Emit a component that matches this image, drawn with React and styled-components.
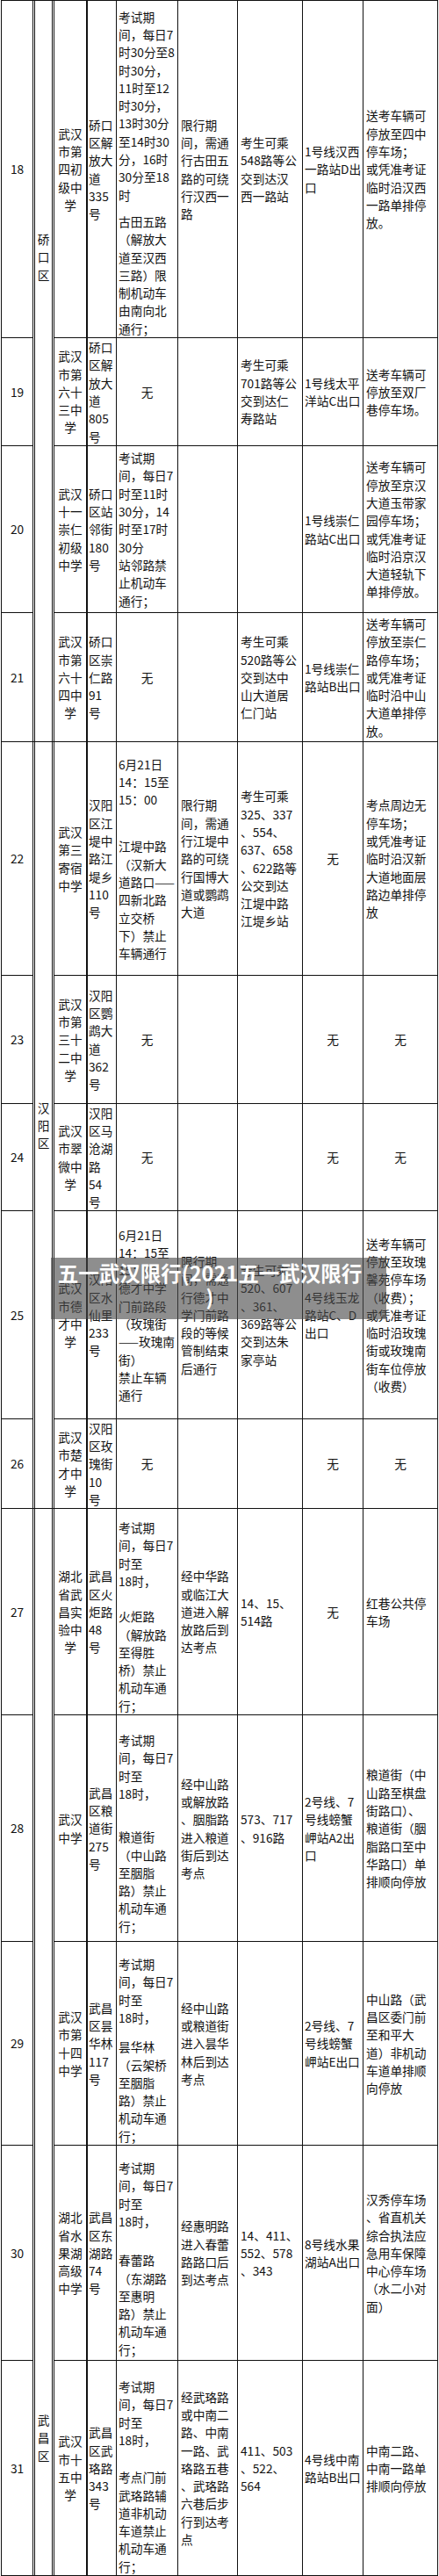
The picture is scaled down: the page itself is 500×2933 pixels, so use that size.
import React from 'react';
import styled, { createGlobalStyle } from 'styled-components';

const GlobalStyle = createGlobalStyle`
  html, body {
    margin: 0;
    padding: 0;
    background: #fff;
  }
  body {
    font-family: "Noto Sans CJK SC", "Noto Sans", sans-serif;
    color: #111;
  }
`;

const Page = styled.div`
  position: relative;
  width: 500px;
  padding-left: 1px;
  box-sizing: border-box;
`;

const Table = styled.div`
  display: grid;
  grid-template-columns: 36px 24px 38px 33px 70px 68px 74px 69px 85px;
  grid-template-rows: ${p => p.$rows};
  width: max-content;
  border-top: 1px solid #111;
  border-left: 1px solid #111;
  font-size: 13.7px;
  line-height: 20.3px;
`;

const Cell = styled.div`
  box-sizing: border-box;
  min-width: 0;
  display: flex;
  flex-direction: column;
  justify-content: ${p => (p.$v === 'end' ? 'flex-end' : p.$v === 'start' ? 'flex-start' : 'center')};
  align-items: ${p => (p.$center ? 'center' : 'flex-start')};
  padding: ${p => `${p.$pt || 0}px ${p.$px ?? 2}px ${p.$pb || 0}px`};
  border-right: ${p => (p.$thick ? 2 : 1)}px solid #111;
  border-bottom: 1px solid #111;
`;

// merged district cell, drawn with the doubled side rules of the source sheet
const District = styled(Cell)`
  grid-row: span ${p => p.$span};
  box-shadow:
    inset 1px 0 #fff, inset 2px 0 #111,
    inset -1px 0 #fff, inset -2px 0 #111;
`;

const Para = styled.div`
  margin-top: ${p => p.$gap || 0}px;
`;

const Line = styled.div`
  white-space: nowrap;
  text-align: ${p => (p.$center ? 'center' : 'left')};
`;

const Banner = styled.div`
  position: absolute;
  left: 58px;
  top: 1432px;
  width: 382px;
  height: 70px;
  overflow: hidden;
  background: rgba(72, 72, 72, 0.62);
`;

const BannerText = styled.div`
  width: 362px;
  padding-top: 4px;
  color: #fff;
  font-size: 23.5px;
  font-weight: 700;
  line-height: 27px;
  text-align: center;
  white-space: nowrap;
`;

const rows = [
  {
    no: 18, h: 384,
    school: '武汉/市第/四初/级中/学', addr: '硚口/区解/放大/道/335/号',
    rule: ['考试期/间，每日7/时30分至8/时30分，/11时至12/时30分，/13时30分/至14时30/分，16时/30分至18/时',
      '古田五路/（解放大/道至汉西/三路）限/制机动车/由南向北/通行；'],
    gap: 10, end: true,
    detour: '限行期/间，需通/行古田五/路的可绕/行汉西一/路',
    bus: '考生可乘/548路等公/交到达汉/西一路站',
    metro: '1号线汉西/一路站D出/口',
    park: '送考车辆可/停放至四中/停车场；/或凭准考证/临时沿汉西/一路单排停/放。',
  },
  {
    no: 19, h: 123,
    school: '武汉/市第/六十/三中/学', addr: '硚口/区解/放大/道/805/号',
    rule: '无', detour: '',
    bus: '考生可乘/701路等公/交到达仁/寿路站',
    metro: '1号线太平/洋站C出口',
    park: '送考车辆可/停放至双厂/巷停车场。',
  },
  {
    no: 20, h: 190,
    school: '武汉/十一/崇仁/初级/中学', addr: '硚口/区站/邻街/180/号',
    rule: '考试期/间，每日7/时至11时/30分，14/时至17时/30分/站邻路禁/止机动车/通行；',
    detour: '', bus: '',
    metro: '1号线崇仁/路站C出口',
    park: '送考车辆可/停放至京汉/大道玉带家/园停车场；/或凭准考证/临时沿京汉/大道轻轨下/单排停放。',
  },
  {
    no: 21, h: 147,
    school: '武汉/市第/六十/四中/学', addr: '硚口/区崇/仁路/91/号',
    rule: '无', detour: '',
    bus: '考生可乘/520路等公/交到达中/山大道居/仁门站',
    metro: '1号线崇仁/路站B出口',
    park: '送考车辆可/停放至崇仁/路停车场；/或凭准考证/临时沿中山/大道单排停/放。',
  },
  {
    no: 22, h: 266,
    school: '武汉/第三/寄宿/中学', addr: '汉阳/区江/堤中/路江/堤乡/110/号',
    rule: ['6月21日/14：15至/15：00', '江堤中路/（汉新大/道路口——/四新北路/立交桥/下）禁止/车辆通行'],
    gap: 33,
    detour: '限行期/间，需通/行江堤中/路的可绕/行国博大/道或鹦鹉/大道',
    bus: '考生可乘/325、337/、554、/637、658/、622路等/公交到达/江堤中路/江堤乡站',
    metro: '无',
    park: '考点周边无/停车场；/或凭准考证/临时沿汉新/大道地面层/路边单排停/放',
  },
  {
    no: 23, h: 146,
    school: '武汉/市第/三十/二中/学', addr: '汉阳/区鹦/鹉大/道/362/号',
    rule: '无', detour: '', bus: '', metro: '无', park: '无',
  },
  {
    no: 24, h: 122,
    school: '武汉/市翠/微中/学', addr: '汉阳/区马/沧湖/路/54/号',
    rule: '无', detour: '', bus: '', metro: '无', park: '无',
  },
  {
    no: 25, h: 237,
    school: '武汉/市德/才中/学', addr: '汉阳/区水/仙里/233/号',
    rule: '6月21日/14：15至/15：00/德才中学/门前路段/（玫瑰街/——玫瑰南/街）/禁止车辆/通行',
    detour: '限行期/间，需通/行德才中/学门前路/段的等候/管制结束/后通行',
    bus: '考生可乘/520、607/、361、/369路等公/交到达朱/家亭站',
    metro: '4号线玉龙/路站C、D/出口',
    park: '送考车辆可/停放至玫瑰/馨苑停车场/（收费）；/或凭准考证/临时沿玫瑰/街或玫瑰南/街车位停放/（收费）',
  },
  {
    no: 26, h: 102,
    school: '武汉/市楚/才中/学', addr: '汉阳/区玫/瑰街/10/号',
    rule: '无', detour: '', bus: '', metro: '无', park: '无',
  },
  {
    no: 27, h: 235,
    school: '湖北/省武/昌实/验中/学', addr: '武昌/区火/炬路/48/号',
    rule: ['考试期/间，每日7/时至/18时，', '火炬路/（解放路/至得胜/桥）禁止/机动车通/行；'],
    gap: 20, end: true,
    detour: '经中华路/或临江大/道进入解/放路后到/达考点',
    bus: '14、15、/514路',
    metro: '无',
    park: '红巷公共停/车场',
  },
  {
    no: 28, h: 258,
    school: '武汉/中学', addr: '武昌/区粮/道街/275/号',
    rule: ['考试期/间，每日7/时至/18时，', '粮道街/（中山路/至胭脂/路）禁止/机动车通/行；'],
    gap: 29, end: true, pb: 7,
    detour: '经中山路/或解放路/、胭脂路/进入粮道/街后到达/考点',
    bus: '573、717/、916路',
    metro: '2号线、7/号线螃蟹/岬站A2出/口',
    park: '粮道街（中/山路至棋盘/街路口）、/粮道街（胭/脂路口至中/华路口）单/排顺向停放',
  },
  {
    no: 29, h: 232,
    school: '武汉/市第/十四/中学', addr: '武昌/区昙/华林/117/号',
    rule: ['考试期/间，每日7/时至/18时，', '昙华林/（云架桥/至胭脂/路）禁止/机动车通/行；'],
    gap: 13, end: true,
    detour: '经中山路/或粮道街/进入昙华/林后到达/考点',
    bus: '',
    metro: '2号线、7/号线螃蟹/岬站E出口',
    park: '中山路（武/昌区委门前/至和平大/道）非机动/车道单排顺/向停放',
  },
  {
    no: 30, h: 245,
    school: '湖北/省水/果湖/高级/中学', addr: '武昌/区东/湖路/74/号',
    rule: ['考试期/间，每日7/时至/18时，', '春蕾路/（东湖路/至惠明/路）禁止/机动车通/行；'],
    gap: 24, end: true, pb: 2,
    detour: '经惠明路/进入春蕾/路路口后/到达考点',
    bus: '14、411、/552、578/、343',
    metro: '8号线水果/湖站A出口',
    park: '汉秀停车场/、省直机关/综合执法应/急用车保障/中心停车场/（水二小对/面）',
  },
  {
    no: 31, h: 245,
    school: '武汉/市十/五中/学', addr: '武昌/区武/珞路/343/号',
    rule: ['考试期/间，每日7/时至/18时，', '考点门前/武珞路辅/道非机动/车道禁止/机动车通/行；'],
    gap: 22, end: true,
    detour: '经武珞路/或中南二/路、中南/一路、武/珞路五巷/、武珞路/六巷后步/行到达考/点',
    bus: '411、503/、522、/564',
    metro: '4号线中南/路站B出口',
    park: '中南二路、/中南一路单/排顺向停放',
  },
];

// district cells span several rows; start index -> cell
const districts = {
  0: { name: '硚口区', span: 4, pt: 261 },
  4: { name: '汉阳区', span: 5 },
  9: { name: '武昌区', span: 5, pt: 1027 },
};

const Text = ({ value, gap, center }) => {
  const paras = Array.isArray(value) ? value : [value];
  return paras.map((p, i) => (
    <Para key={i} $gap={i ? gap : 0}>
      {p.split('/').map((l, j) => (
        <Line key={j} $center={center}>{l}</Line>
      ))}
    </Para>
  ));
};

const TextCell = ({ value, gap, ...rest }) => {
  const none = value === '无';
  return (
    <Cell $center={none} {...rest}>
      {value ? <Text value={value} gap={gap} /> : null}
    </Cell>
  );
};

export default function App() {
  const template = rows.map(r => `${r.h}px`).join(' ');

  return (
    <Page>
      <GlobalStyle />
      <Table $rows={template}>
        {rows.map((r, i) => {
          const d = districts[i];
          return (
            <React.Fragment key={r.no}>
              <Cell $center>{r.no}</Cell>
              {d && (
                <District $span={d.span} $center $v={d.pt ? 'start' : 'center'} $pt={d.pt} $px={0}>
                  <Text value={d.name.split('').join('/')} center />
                </District>
              )}
              <Cell $center $thick $px={0}>
                <Text value={r.school} center />
              </Cell>
              <Cell $px={1}>
                <Text value={r.addr} />
              </Cell>
              <TextCell
                value={r.rule}
                gap={r.gap}
                $v={r.end ? 'end' : 'center'}
                $pb={r.pb}
              />
              <TextCell value={r.detour} $px={3} />
              <TextCell value={r.bus} $px={3} />
              <TextCell value={r.metro} $px={2} />
              <TextCell value={r.park} $px={3} />
            </React.Fragment>
          );
        })}
      </Table>
      <Banner>
        <BannerText>
          五一武汉限行(2021五一武汉限行
          <br />)
        </BannerText>
      </Banner>
    </Page>
  );
}
